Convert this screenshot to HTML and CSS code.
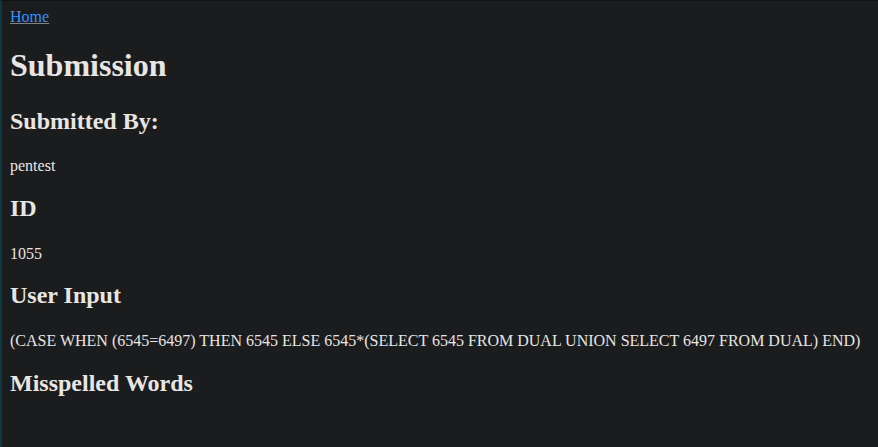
FILE: index.html
```html
<!DOCTYPE html>
<html>
<head>
<meta charset="utf-8">
<title>Submission</title>
<link rel="stylesheet" href="styles.css">
</head>
<body class="page">
<a class="home-link" href="#">Home</a>
<h1 class="title">Submission</h1>
<h2 class="label">Submitted By:</h2>
<p class="value">pentest</p>
<h2 class="label">ID</h2>
<p class="value">1055</p>
<h2 class="label">User Input</h2>
<p class="value">(CASE WHEN (6545=6497) THEN 6545 ELSE 6545*(SELECT 6545 FROM DUAL UNION SELECT 6497 FROM DUAL) END)</p>
<h2 class="label">Misspelled Words</h2>
</body>
</html>
```
FILE: styles.css
```css
html {
  background: #1b1c1e;
  border-top: 1px solid #111213;
  border-left: 2px solid #0c3b42;
  min-height: 100%;
  box-sizing: border-box;
}
.page {
  margin: 7px 8px 8px 8px;
  font-family: "Liberation Serif", "Times New Roman", serif;
  color: #e8e6e3;
  background: #1b1c1e;
}
.home-link {
  color: #3391ff;
}
.title {
  font-size: 2em;
  margin: 20.5px 0 24.5px;
}
.label {
  font-size: 1.5em;
  margin: 0.83em 0 0.93em;
}
.value {
  margin: 1em 0;
}
```
